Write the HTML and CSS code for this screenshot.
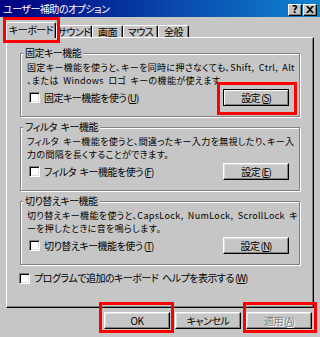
FILE: index.html
```html
<!DOCTYPE html>
<html lang="ja">
<head>
<meta charset="utf-8">
<title>ユーザー補助のオプション</title>
<link rel="stylesheet" href="styles.css">
</head>
<body>
<div class="window">
  <div class="titlebar">
    <span class="title">ユーザー補助のオプション</span>
    <div class="tb-btns">
      <span class="tb-btn help">?</span>
      <span class="tb-btn close"><svg width="8" height="7" viewBox="0 0 8 7"><path d="M0 0h2l2 2 2-2h2L5 3.5 8 7H6L4 5 2 7H0l3-3.5z" fill="#000"/></svg></span>
    </div>
  </div>
  <div class="tabs">
    <div class="tab active w-key">キーボード</div>
    <div class="tab w-snd">サウンド</div>
    <div class="tab w-scr">画面</div>
    <div class="tab w-mouse">マウス</div>
    <div class="tab w-gen">全般</div>
  </div>
  <div class="panel">
    <div class="group">
      <div class="legend">固定キー機能</div>
      <p class="desc">固定キー機能を使うと、キーを同時に押さなくても、Shift, Ctrl, Alt<br>、または Windows ロゴ キーの機能が使えます。</p>
      <div class="row">
        <label class="check"><span class="box"></span><span>固定キー機能を使う<span class="mn">(<u>U</u>)</span></span></label>
        <button class="btn focus">設定<span class="mn">(<u>S</u>)</span></button>
      </div>
    </div>
    <div class="group">
      <div class="legend">フィルタ キー機能</div>
      <p class="desc">フィルタ キー機能を使うと、間違ったキー入力を無視したり、キー入<br>力の間隔を長くすることができます。</p>
      <div class="row">
        <label class="check"><span class="box"></span><span>フィルタ キー機能を使う<span class="mn">(<u>F</u>)</span></span></label>
        <button class="btn">設定<span class="mn">(<u>E</u>)</span></button>
      </div>
    </div>
    <div class="group">
      <div class="legend">切り替えキー機能</div>
      <p class="desc">切り替えキー機能を使うと、CapsLock, NumLock, ScrollLock キ<br>ーを押したときに音を鳴らします。</p>
      <div class="row">
        <label class="check"><span class="box"></span><span>切り替えキー機能を使う<span class="mn">(<u>T</u>)</span></span></label>
        <button class="btn">設定<span class="mn">(<u>N</u>)</span></button>
      </div>
    </div>
    <label class="check bottom"><span class="box"></span><span>プログラムで追加のキーボード ヘルプを表示する<span class="mn">(<u>W</u>)</span></span></label>
  </div>
  <div class="actions">
    <button class="btn">OK</button>
    <button class="btn">キャンセル</button>
    <button class="btn disabled">適用<span class="mn">(<u>A</u>)</span></button>
  </div>
  <div class="mark m-tab"></div>
  <div class="mark m-set"></div>
  <div class="mark m-ok"></div>
  <div class="mark m-apply"></div>
</div>
</body>
</html>
```
FILE: styles.css
```css
* { box-sizing: border-box; }
html, body {
  margin: 0;
  padding: 0;
}
body {
  width: 320px;
  height: 337px;
  overflow: hidden;
  background: #c6c6c6;
  font-family: "Noto Sans CJK JP", sans-serif;
  font-size: 10px;
  line-height: 12px;
  font-feature-settings: "palt";
  letter-spacing: -0.5px;
  word-spacing: 2px;
  color: #000;
}
.window {
  position: relative;
  width: 320px;
  height: 337px;
  background: #c6c6c6;
  overflow: hidden;
}
.titlebar {
  height: 17px;
  display: flex;
  align-items: center;
  justify-content: space-between;
  padding: 0 3px 0 3px;
  background: linear-gradient(to right, #000080, #1084d0);
  color: #fff;
}
.title {
  line-height: 12px;
  padding-top: 1px;
}
.tb-btns {
  display: flex;
  gap: 1px;
  margin-top: 2px;
}
.tb-btn {
  width: 14px;
  height: 12px;
  background: #c6c6c6;
  border: 1px solid;
  border-color: #fff #000 #000 #fff;
  box-shadow: inset -1px -1px 0 #808080;
  display: flex;
  align-items: center;
  justify-content: center;
  color: #000;
  font-family: "DejaVu Sans", sans-serif;
  font-weight: bold;
  font-size: 10px;
  letter-spacing: 0;
  line-height: 10px;
}
.tabs {
  display: flex;
  align-items: flex-end;
  height: 20px;
  padding-left: 6px;
}
.tab {
  height: 12px;
  border-left: 1px solid #fff;
  border-top: 1px solid #fff;
  border-right: 1px solid #000;
  box-shadow: inset -1px 0 0 #808080;
  border-radius: 2px 2px 0 0;
  display: flex;
  align-items: center;
  justify-content: center;
  line-height: 11px;
  white-space: nowrap;
}
.tab.active {
  height: 16px;
  margin-bottom: -1px;
  position: relative;
  z-index: 2;
  background: #c6c6c6;
  padding-bottom: 2px;
}
.w-key { width: 50px; }
.w-snd { width: 36px; }
.w-scr { width: 31px; }
.w-mouse { width: 35px; }
.w-gen { width: 31px; }
.panel {
  margin-left: 6px;
  width: 308px;
  height: 271px;
  border: 1px solid;
  border-color: #fff #000 #000 #fff;
  box-shadow: inset -1px -1px 0 #808080;
  padding: 15px 13px 0 13px;
}
.group {
  border: 1px solid #808080;
  box-shadow: 1px 1px 0 #fff, inset 1px 1px 0 #fff;
  padding: 0 10px 10px 6px;
  margin-bottom: 10px;
}
.legend {
  width: fit-content;
  margin: -7px 0 0 -4px;
  padding: 0 2px;
  background: #c6c6c6;
  line-height: 12px;
  white-space: nowrap;
}
.desc {
  margin: 2px 0 0 0;
  font-size: 9px;
  letter-spacing: 0.35px;
  line-height: 13px;
  white-space: nowrap;
}
.row {
  margin-top: 2px;
  height: 17px;
  display: flex;
  align-items: center;
  justify-content: space-between;
  padding-left: 2px;
}
.check {
  display: flex;
  align-items: center;
  gap: 4px;
  white-space: nowrap;
  line-height: 12px;
}
.mn {
  letter-spacing: -1px;
  margin-left: 1px;
}
.box {
  width: 11px;
  height: 11px;
  flex: none;
  background: #fff;
  border: 1px solid;
  border-color: #808080 #fff #fff #808080;
  box-shadow: inset 1px 1px 0 #000, inset -1px -1px 0 #dfdfdf;
}
.check.bottom {
  margin: -3px 0 0 -1px;
}
.btn {
  width: 66px;
  height: 17px;
  padding: 0;
  margin: 0;
  background: #c6c6c6;
  border: 1px solid;
  border-color: #fff #000 #000 #fff;
  box-shadow: inset -1px -1px 0 #808080, inset 1px 1px 0 #dfdfdf;
  font: inherit;
  letter-spacing: inherit;
  word-spacing: inherit;
  color: #000;
  line-height: 13px;
  display: flex;
  align-items: center;
  justify-content: center;
}
.btn.focus {
  border-color: #000;
  box-shadow: inset 1px 1px 0 #fff, inset -1px -1px 0 #808080;
}
.btn.disabled {
  color: #808080;
  text-shadow: 1px 1px 0 #fff;
}
.actions {
  display: flex;
  justify-content: flex-end;
  gap: 5px;
  padding-right: 8px;
  margin-top: 4px;
}
.mark {
  position: absolute;
  border: 3px solid #ff0000;
}
.m-tab { left: 3px; top: 17px; width: 57px; height: 26px; }
.m-set { left: 217px; top: 82px; width: 80px; height: 33px; }
.m-ok { left: 99px; top: 302px; width: 75px; height: 31px; }
.m-apply { left: 243px; top: 302px; width: 74px; height: 31px; }
```
